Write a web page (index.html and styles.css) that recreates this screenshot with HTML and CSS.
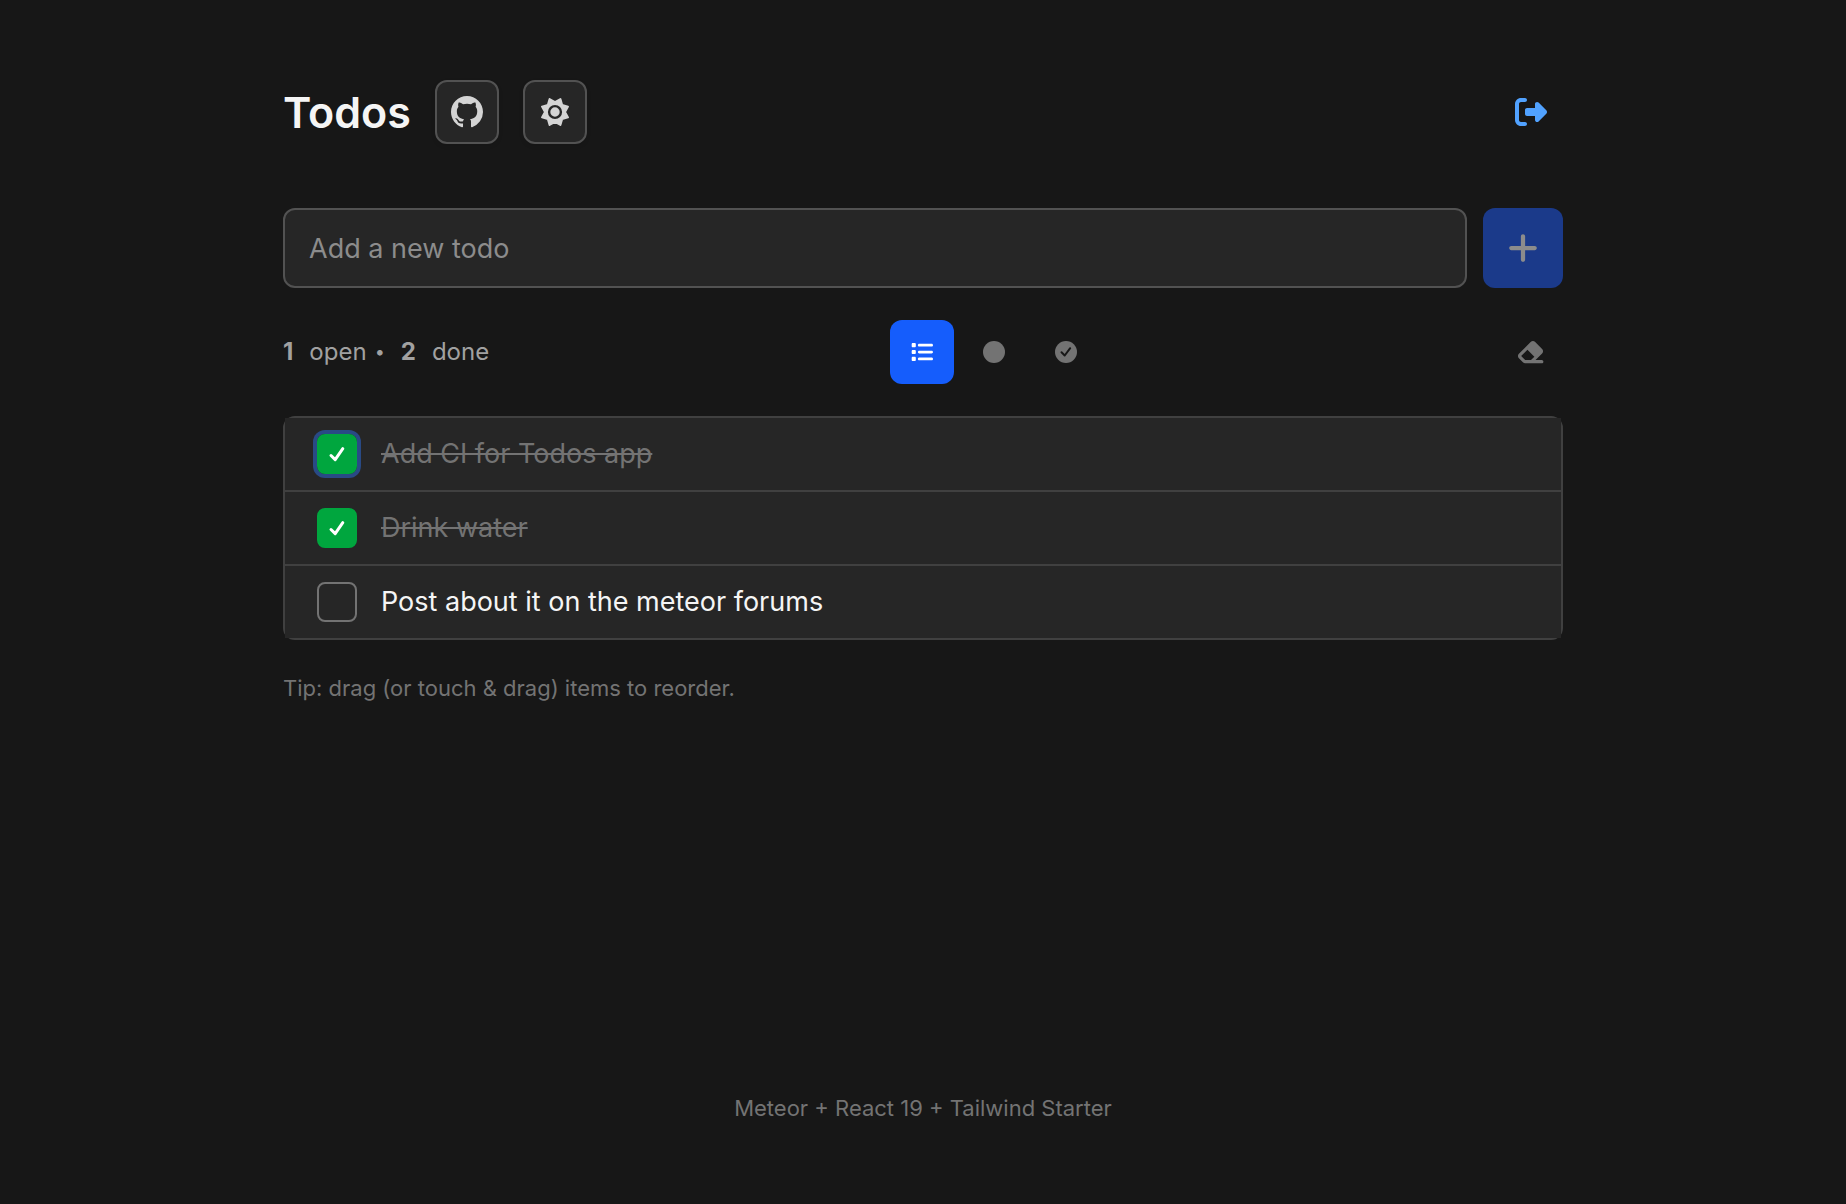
FILE: index.html
```html
<!DOCTYPE html>
<html lang="en">
<head>
<meta charset="utf-8">
<meta name="viewport" content="width=device-width, initial-scale=1">
<title>Todos</title>
<link rel="stylesheet" href="styles.css">
</head>
<body>
<div class="page">
  <header class="header">
    <h1 class="title">Todos</h1>
    <a class="icon-button framed" href="#" aria-label="GitHub repository">
      <svg width="32" height="32" viewBox="0 0 16 16" fill="currentColor" aria-hidden="true"><path d="M8 0C3.58 0 0 3.58 0 8c0 3.54 2.29 6.53 5.47 7.59.4.07.55-.17.55-.38 0-.19-.01-.82-.01-1.49-2.01.37-2.53-.49-2.69-.94-.09-.23-.48-.94-.82-1.13-.28-.15-.68-.52-.01-.53.63-.01 1.08.58 1.23.82.72 1.21 1.87.87 2.33.66.07-.52.28-.87.51-1.07-1.78-.2-3.64-.89-3.64-3.95 0-.87.31-1.59.82-2.15-.08-.2-.36-1.02.08-2.12 0 0 .67-.21 2.2.82.64-.18 1.32-.27 2-.27s1.36.09 2 .27c1.53-1.04 2.2-.82 2.2-.82.44 1.1.16 1.92.08 2.12.51.56.82 1.27.82 2.15 0 3.07-1.87 3.75-3.65 3.95.29.25.54.73.54 1.48 0 1.07-.01 1.93-.01 2.2 0 .21.15.46.55.38A8.01 8.01 0 0 0 16 8c0-4.42-3.58-8-8-8z"/></svg>
    </a>
    <button class="icon-button framed" type="button" aria-label="Toggle theme">
      <svg width="30" height="30" viewBox="0 0 30 30" aria-hidden="true"><path d="M25 15 28 20.400 22.100 22.100 20.400 28 15 25 9.600 28 7.900 22.100 2 20.400 5 15 2 9.600 7.900 7.900 9.600 2 15 5 20.400 2 22.100 7.900 28 9.600z" fill="currentColor" stroke="currentColor" stroke-width="2" stroke-linejoin="round"/><circle cx="15" cy="15" r="5.900" fill="none" stroke="#262626" stroke-width="2.400"/></svg>
    </button>
    <button class="icon-button logout" type="button" aria-label="Log out">
      <svg width="32" height="32" viewBox="0 0 512 512" fill="currentColor" aria-hidden="true"><path d="M377.9 105.9L500.7 228.7c7.2 7.2 11.3 17.1 11.3 27.3s-4.1 20.1-11.3 27.3L377.9 406.1c-6.4 6.4-15 9.9-24 9.9c-18.7 0-33.9-15.2-33.9-33.9l0-62.1-128 0c-17.7 0-32-14.3-32-32l0-64c0-17.7 14.3-32 32-32l128 0 0-62.1c0-18.7 15.2-33.9 33.9-33.9c9 0 17.6 3.6 24 9.9zM160 96L96 96c-17.7 0-32 14.3-32 32l0 256c0 17.7 14.3 32 32 32l64 0c17.7 0 32 14.3 32 32s-14.3 32-32 32l-64 0c-53 0-96-43-96-96L0 128C0 75 43 32 96 32l64 0c17.7 0 32 14.3 32 32s-14.3 32-32 32z"/></svg>
    </button>
  </header>

  <main class="main">
    <form class="add-form">
      <input class="add-input" type="text" placeholder="Add a new todo" aria-label="Add a new todo">
      <button class="add-button" type="submit" aria-label="Add todo" disabled>
        <svg width="30" height="34" viewBox="0 0 448 512" fill="currentColor" aria-hidden="true"><path d="M256 80c0-17.7-14.3-32-32-32s-32 14.3-32 32l0 144L48 224c-17.7 0-32 14.3-32 32s14.3 32 32 32l144 0 0 144c0 17.7 14.3 32 32 32s32-14.3 32-32l0-144 144 0c17.7 0 32-14.3 32-32s-14.3-32-32-32l-144 0 0-144z"/></svg>
      </button>
    </form>

    <div class="toolbar">
      <p class="counts"><strong>1</strong><span>open</span><span class="dot">•</span><strong>2</strong><span>done</span></p>
      <div class="filters">
        <button class="icon-button active" type="button" aria-label="All" aria-pressed="true">
          <svg width="22" height="22" viewBox="0 0 512 512" fill="currentColor" aria-hidden="true"><path d="M40 48C26.700 48 16 58.700 16 72l0 48c0 13.300 10.700 24 24 24l48 0c13.300 0 24-10.700 24-24l0-48c0-13.300-10.700-24-24-24L40 48zM192 64c-17.700 0-32 14.300-32 32s14.300 32 32 32l288 0c17.700 0 32-14.300 32-32s-14.300-32-32-32L192 64zm0 160c-17.700 0-32 14.300-32 32s14.300 32 32 32l288 0c17.700 0 32-14.300 32-32s-14.300-32-32-32l-288 0zm0 160c-17.700 0-32 14.300-32 32s14.300 32 32 32l288 0c17.700 0 32-14.300 32-32s-14.300-32-32-32l-288 0zM16 232l0 48c0 13.300 10.700 24 24 24l48 0c13.300 0 24-10.700 24-24l0-48c0-13.300-10.700-24-24-24l-48 0c-13.300 0-24 10.700-24 24zM40 368c-13.300 0-24 10.700-24 24l0 48c0 13.300 10.700 24 24 24l48 0c13.300 0 24-10.700 24-24l0-48c0-13.300-10.700-24-24-24l-48 0z"/></svg>
        </button>
        <button class="icon-button muted" type="button" aria-label="Open" aria-pressed="false">
          <svg width="22" height="22" viewBox="0 0 22 22" fill="currentColor" aria-hidden="true"><circle cx="11" cy="11" r="11"/></svg>
        </button>
        <button class="icon-button muted" type="button" aria-label="Done" aria-pressed="false">
          <svg width="22" height="22" viewBox="0 0 22 22" fill="currentColor" aria-hidden="true"><circle cx="11" cy="11" r="11"/><path d="M6.500 11.300 9.700 14.500 15.200 7.200" fill="none" stroke="#171717" stroke-width="2" stroke-linecap="round" stroke-linejoin="round"/></svg>
        </button>
      </div>
      <button class="icon-button muted" type="button" aria-label="Clear completed">
        <svg width="29" height="26" viewBox="0 0 576 512" fill="currentColor" aria-hidden="true"><path d="M290.700 57.400L57.400 290.700c-25 25-25 65.500 0 90.500l80 80c12 12 28.300 18.700 45.300 18.700L288 480l9.400 0L512 480c17.700 0 32-14.300 32-32s-14.300-32-32-32l-124.100 0L518.600 285.300c25-25 25-65.500 0-90.500L381.300 57.400c-25-25-65.500-25-90.500 0zM297.400 416l-9.400 0-105.400 0-80-80L227.300 211.300 364.700 348.700 297.400 416z"/></svg>
      </button>
    </div>

    <ul class="todos">
      <li class="todo">
        <span class="tick focused">
          <input class="box" type="checkbox" id="todo-1" checked>
          <svg class="mark" width="40" height="40" viewBox="0 0 40 40" aria-hidden="true"><path d="M14 21.500 18.200 25.600 25.800 14.700"/></svg>
        </span>
        <label class="label" for="todo-1">Add CI for Todos app</label>
      </li>
      <li class="todo">
        <span class="tick">
          <input class="box" type="checkbox" id="todo-2" checked>
          <svg class="mark" width="40" height="40" viewBox="0 0 40 40" aria-hidden="true"><path d="M14 21.500 18.200 25.600 25.800 14.700"/></svg>
        </span>
        <label class="label" for="todo-2">Drink water</label>
      </li>
      <li class="todo">
        <span class="tick">
          <input class="box" type="checkbox" id="todo-3">
        </span>
        <label class="label open" for="todo-3">Post about it on the meteor forums</label>
      </li>
    </ul>

    <p class="tip">Tip: drag (or touch &amp; drag) items to reorder.</p>
  </main>

  <footer class="footer">Meteor + React 19 + Tailwind Starter</footer>
</div>
</body>
</html>
```
FILE: styles.css
```css
*,
*::before,
*::after {
  box-sizing: border-box;
}

body {
  margin: 0;
  background: #171717;
  color: #f5f5f5;
  font-family: Inter, "Liberation Sans", sans-serif;
  font-size: 27px;
  line-height: 40px;
}

button,
input {
  margin: 0;
  font: inherit;
  color: inherit;
}

.page {
  display: flex;
  flex-direction: column;
  max-width: 1344px;
  min-height: 100vh;
  margin: 0 auto;
  padding: 80px 32px;
}

.header {
  display: flex;
  align-items: center;
  gap: 24px;
  margin-bottom: 64px;
}

.title {
  margin: 0;
  font-size: 43px;
  font-weight: 600;
  line-height: 64px;
}

.icon-button {
  display: flex;
  flex: none;
  align-items: center;
  justify-content: center;
  width: 64px;
  height: 64px;
  padding: 0;
  border: 0;
  border-radius: 12px;
  background: transparent;
}

.framed {
  border: 2px solid #525252;
  background: #262626;
  color: #d4d4d4;
  box-shadow: 0 2px 4px rgb(0 0 0 / 10%);
}

.logout {
  margin-left: auto;
  color: #51a2ff;
}

.active {
  background: #155dfc;
  color: #fff;
}

.muted {
  color: #737373;
}

.main {
  flex: 1;
}

.add-form {
  display: flex;
  gap: 16px;
}

.add-input {
  flex: 1;
  min-width: 0;
  height: 80px;
  padding: 0 24px;
  border: 2px solid #525252;
  border-radius: 12px;
  background: #262626;
}

.add-input::placeholder {
  color: #8c8c8c;
  opacity: 1;
}

.add-button {
  display: flex;
  align-items: center;
  justify-content: center;
  width: 80px;
  height: 80px;
  padding: 0;
  border: 0;
  border-radius: 12px;
  background: #1b3a8a;
  color: #8c8c8c;
}

.toolbar {
  display: flex;
  align-items: center;
  justify-content: space-between;
  margin: 32px 0;
}

.counts {
  display: flex;
  gap: 16px;
  margin: 0;
  color: #a1a1a1;
  font-size: 24px;
}

.counts strong {
  font-weight: 700;
}

.dot {
  margin-left: -8px;
  font-size: 18px;
}

.filters {
  display: flex;
  gap: 8px;
}

.todos {
  margin: 0;
  padding: 0;
  border: 2px solid #404040;
  border-radius: 12px;
  list-style: none;
}

.todo {
  display: flex;
  align-items: center;
  gap: 24px;
  padding: 16px 32px;
  background: #262626;
}

.todo + .todo {
  border-top: 2px solid #404040;
}

.tick {
  display: grid;
  flex: none;
  width: 40px;
  height: 40px;
  border-radius: 8px;
}

.focused {
  box-shadow: 0 0 0 4px #294a85;
}

.box,
.mark {
  grid-area: 1 / 1;
}

.box {
  width: 40px;
  height: 40px;
  border: 2px solid #737373;
  border-radius: 8px;
  appearance: none;
}

.box:checked {
  border-color: #00a63e;
  background: #00a63e;
}

.mark {
  pointer-events: none;
  fill: none;
  stroke: #fff;
  stroke-width: 3;
  stroke-linecap: round;
  stroke-linejoin: round;
}

.label {
  color: #737373;
  text-decoration: line-through;
}

.label.open {
  color: #f5f5f5;
  text-decoration: none;
}

.tip {
  margin: 32px 0 0;
  color: #737373;
  font-size: 22px;
  line-height: 32px;
}

.footer {
  color: #737373;
  font-size: 22px;
  line-height: 32px;
  text-align: center;
}
```
